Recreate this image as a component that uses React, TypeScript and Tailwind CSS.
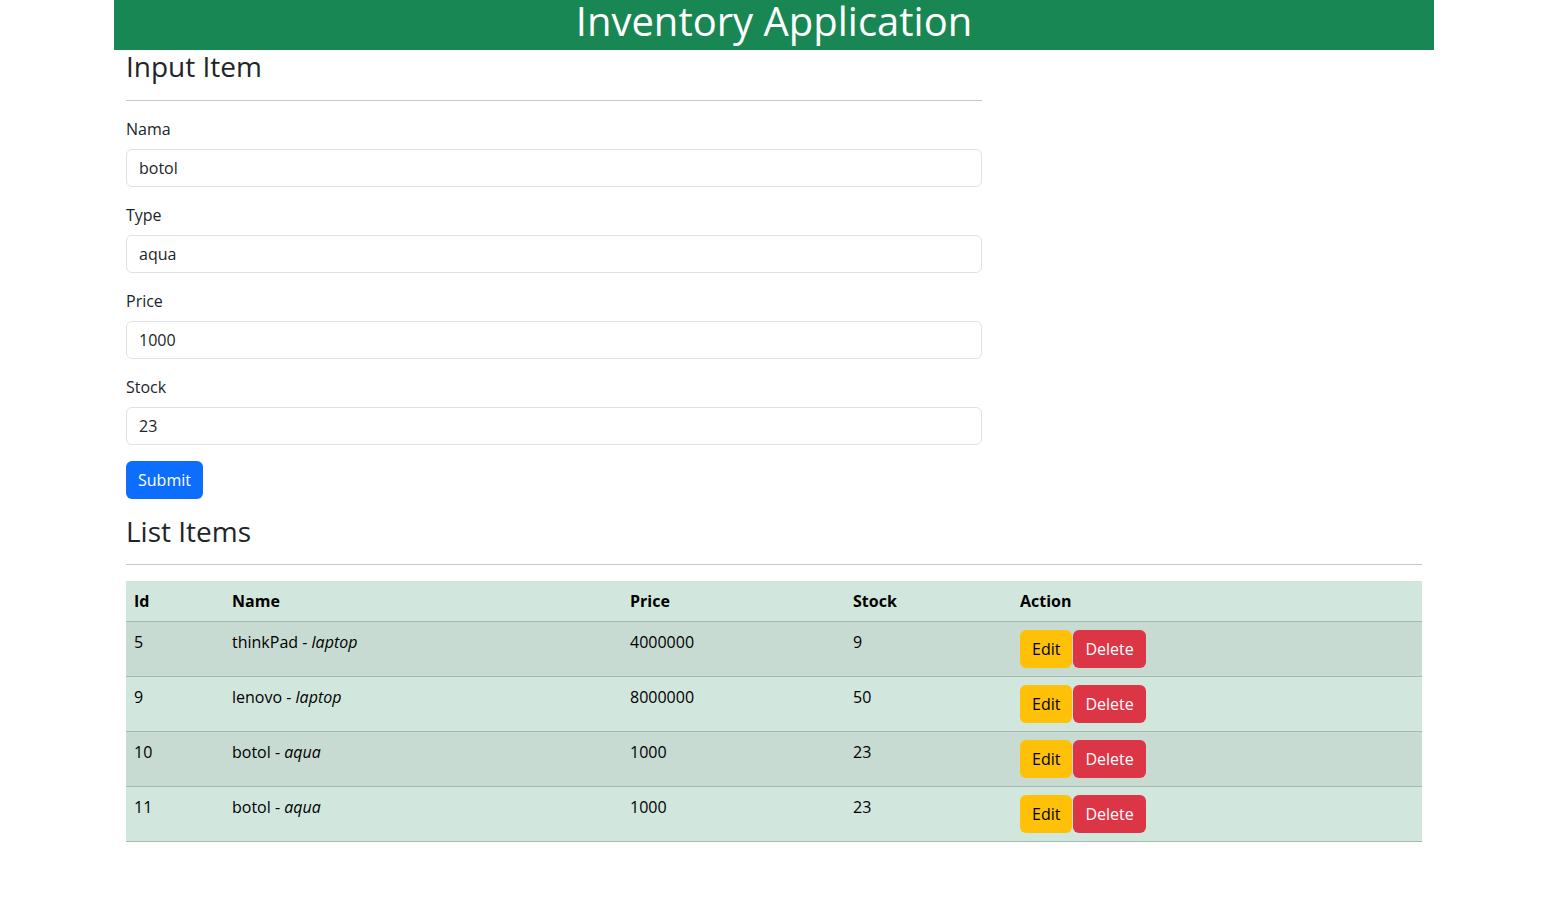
import React, { useState } from 'react';

type Item = { id: number; name: string; type: string; price: number; stock: number };

const font = { fontFamily: '"Open Sans", "Noto Sans", sans-serif' };

const App: React.FC = () => {
  const [form, setForm] = useState({ name: 'botol', type: 'aqua', price: '1000', stock: '23' });

  const items: Item[] = [
    { id: 5, name: 'thinkPad', type: 'laptop', price: 4000000, stock: 9 },
    { id: 9, name: 'lenovo', type: 'laptop', price: 8000000, stock: 50 },
    { id: 10, name: 'botol', type: 'aqua', price: 1000, stock: 23 },
    { id: 11, name: 'botol', type: 'aqua', price: 1000, stock: 23 },
  ];

  const fields: { key: keyof typeof form; label: string }[] = [
    { key: 'name', label: 'Nama' },
    { key: 'type', label: 'Type' },
    { key: 'price', label: 'Price' },
    { key: 'stock', label: 'Stock' },
  ];

  return (
    <div className="min-h-screen bg-white text-[#212529] text-base" style={font}>
      <div className="ml-[114px] w-[1320px]">
        {/* header */}
        <div className="h-[50px] bg-[#198754] overflow-hidden">
          <h1 className="text-[40px] leading-[42px] font-medium text-white text-center">Inventory Application</h1>
        </div>

        <div className="px-3">
          {/* form */}
          <div className="w-[856px]">
            <h3 className="text-[28px] leading-[33.6px] font-medium">Input Item</h3>
            <hr className="my-4 border-t border-[#c8c9ca]" />
            {fields.map(f => (
              <div key={f.key} className="mb-4">
                <label className="block mb-2 leading-6">{f.label}</label>
                <input
                  type="text"
                  value={form[f.key]}
                  onChange={e => setForm({ ...form, [f.key]: e.target.value })}
                  className="block w-full h-[38px] px-3 border border-[#dee2e6] rounded-md outline-none text-base"
                />
              </div>
            ))}
            <button className="h-[38px] px-3 bg-[#0d6efd] text-white rounded-md leading-6">Submit</button>
          </div>

          {/* list */}
          <h3 className="mt-4 text-[28px] leading-[33.6px] font-medium">List Items</h3>
          <hr className="my-4 border-t border-[#c8c9ca]" />
          <table className="w-full border-collapse bg-[#d1e7dd] text-black">
            <thead>
              <tr className="border-b border-[#a7b8b0] text-left">
                <th className="w-[98px] px-2 py-2 leading-6 font-bold">Id</th>
                <th className="w-[398px] px-2 py-2 leading-6 font-bold">Name</th>
                <th className="w-[223px] px-2 py-2 leading-6 font-bold">Price</th>
                <th className="w-[167px] px-2 py-2 leading-6 font-bold">Stock</th>
                <th className="px-2 py-2 leading-6 font-bold">Action</th>
              </tr>
            </thead>
            <tbody>
              {items.map((item, i) => (
                <tr key={item.id} className={`border-b border-[#a7b8b0] align-top ${i % 2 === 0 ? 'bg-[#c7dbd2]' : ''}`}>
                  <td className="px-2 py-2 leading-6">{item.id}</td>
                  <td className="px-2 py-2 leading-6">
                    {item.name} - <i>{item.type}</i>
                  </td>
                  <td className="px-2 py-2 leading-6">{item.price}</td>
                  <td className="px-2 py-2 leading-6">{item.stock}</td>
                  <td className="px-2 py-2">
                    <div className="flex gap-px">
                      <button className="h-[38px] px-3 bg-[#ffc107] text-black rounded-md leading-6">Edit</button>
                      <button className="h-[38px] px-3 bg-[#dc3545] text-white rounded-md leading-6">Delete</button>
                    </div>
                  </td>
                </tr>
              ))}
            </tbody>
          </table>
        </div>
      </div>
    </div>
  );
};

export default App;
